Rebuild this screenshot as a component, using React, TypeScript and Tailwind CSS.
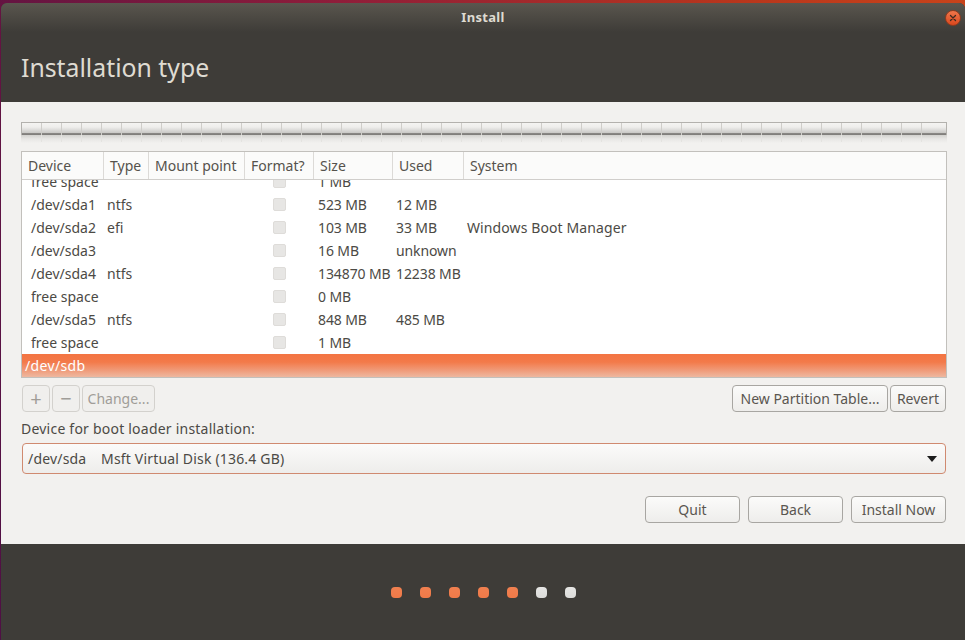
import React from "react";

const cols = ["w-[82px]", "w-[45px]", "w-[96px]", "w-[69px]", "w-[79px]", "w-[71px]", "flex-1"];
const headers = ["Device", "Type", "Mount point", "Format?", "Size", "Used", "System"];
const rows = [
  ["free space", "", "1 MB", "", ""],
  ["/dev/sda1", "ntfs", "523 MB", "12 MB", ""],
  ["/dev/sda2", "efi", "103 MB", "33 MB", "Windows Boot Manager"],
  ["/dev/sda3", "", "16 MB", "unknown", ""],
  ["/dev/sda4", "ntfs", "134870 MB", "12238 MB", ""],
  ["free space", "", "0 MB", "", ""],
  ["/dev/sda5", "ntfs", "848 MB", "485 MB", ""],
  ["free space", "", "1 MB", "", ""],
];
const ticks = Array.from({ length: 46 });
const dots = [1, 1, 1, 1, 1, 0, 0];

function Btn({ children, className = "" }: { children: React.ReactNode; className?: string }) {
  return (
    <button className={`h-[27px] flex items-center justify-center rounded-[4px] border border-[#a8a6a2] bg-gradient-to-b from-[#fbfbfa] to-[#eeedeb] text-[#5a5650] leading-none whitespace-nowrap ${className}`}>
      {children}
    </button>
  );
}

function Off({ children, className = "" }: { children: React.ReactNode; className?: string }) {
  return (
    <div className={`h-[27px] flex items-center justify-center rounded-[4px] border border-[#d3d1cd] bg-[#f0efed] text-[#a09d98] leading-none ${className}`}>
      {children}
    </div>
  );
}

export default function App() {
  return (
    <div
      className="w-[965px] h-[640px] overflow-hidden pt-[3px] pl-px bg-[linear-gradient(75deg,#4f0f45_0%,#8f1d3a_45%,#b8361c_80%,#c8431a_100%)] text-[14px] text-[#4c4a45]"
      style={{ fontFamily: '"Noto Sans", sans-serif' }}
    >
      <div className="h-[637px] flex flex-col rounded-t-[6px] overflow-hidden">
        <header className="h-[99px] shrink-0 bg-[#3e3c38] flex flex-col">
          <div className="h-[29px] shrink-0 relative flex items-center justify-center bg-gradient-to-b from-[#5a564e] to-[#3e3c38]">
            <span className="font-bold text-[13px] text-[#dfdbd2] tracking-[0.3px] pt-px">Install</span>
            <div className="absolute right-[4px] top-[7px] w-[16px] h-[16px] rounded-full bg-gradient-to-b from-[#f0764a] to-[#d9471c] border border-[#8f3a1e] flex items-center justify-center">
              <svg width="8" height="8" viewBox="0 0 8 8" className="block">
                <path d="M1.5 1.5 L6.5 6.5 M6.5 1.5 L1.5 6.5" stroke="#3e2a20" strokeWidth="1.3" strokeLinecap="round" />
              </svg>
            </div>
          </div>
          <h1 className="mt-[17px] ml-[20px] text-[24.8px] leading-[36px] text-[#dfdbd2] font-normal">Installation type</h1>
        </header>

        <main className="h-[442px] shrink-0 bg-[#f2f1ef] pt-[20px] pl-[20px] pr-[18px] flex flex-col">
          <div className="h-[13px] flex border border-[#b3b1ad] border-b-0 bg-[linear-gradient(to_bottom,#f5f4f2_0%,#eeedeb_35%,#c8c7c4_84%,#8a8885_86%,#7d7b78_100%)]">
            {ticks.map((_, i) => (
              <div key={i} className="w-[20px] h-full border-r border-[#cfcdc9] last:border-r-0 last:flex-1" />
            ))}
          </div>
          <div className="h-[16px] bg-[linear-gradient(to_bottom,#d2d1ce_0%,#e8e7e5_25%,#f2f1ef_50%)]">
            <div className="h-[7px] flex pl-px">
              {ticks.map((_, i) => (
                <div key={i} className="w-[20px] h-full border-r border-[#e4e3e0] last:border-r-0 last:flex-1" />
              ))}
            </div>
          </div>

          <section className="h-[226px] border border-[#c2c0bc] border-b-0 bg-white overflow-hidden flex flex-col">
            <div className="h-[28px] shrink-0 flex border-b border-[#d0cecb] bg-[#fbfbfa]">
              {headers.map((h, i) => (
                <div key={h} className={`${cols[i]} pl-[6px] flex items-center border-r border-[#dcdad7] last:border-r-0 text-[#55524c] whitespace-nowrap`}>
                  {h}
                </div>
              ))}
            </div>
            <div className="flex-1 overflow-hidden relative">
              <div className="-mt-[10px]">
                {rows.map((r, idx) => (
                  <div key={idx} className="h-[23px] flex items-center whitespace-nowrap text-[#4c4a45]">
                    <div className="w-[82px] pl-[9px]">{r[0]}</div>
                    <div className="w-[45px] pl-[3px]">{r[1]}</div>
                    <div className="w-[96px]" />
                    <div className="w-[69px] flex justify-center">
                      <div className="w-[13px] h-[13px] rounded-[2px] bg-[#e7e6e4] border border-[#dedcd9]" />
                    </div>
                    <div className="w-[79px] pl-[4px] tracking-[-0.1px]">{r[2]}</div>
                    <div className="w-[71px] pl-[3px] tracking-[-0.1px]">{r[3]}</div>
                    <div className="flex-1 pl-[3px] tracking-[0.1px]">{r[4]}</div>
                  </div>
                ))}
                <div className="h-[23px] flex items-center pl-[3px] tracking-[0.35px] text-white bg-[linear-gradient(to_bottom,#f37442_0%,#f37a4a_35%,#f09a78_70%,#eeb8a0_100%)]">/dev/sdb</div>
              </div>
            </div>
          </section>
          <div className="h-px bg-[#c2c0bc]" />

          <div className="mt-[7px] ml-px flex">
            <Off className="w-[28px] text-[20px]">+</Off>
            <Off className="w-[28px] ml-[2px] text-[20px]">−</Off>
            <Off className="w-[73px] ml-[2px]">Change...</Off>
            <Btn className="w-[156px] ml-auto">New Partition Table...</Btn>
            <Btn className="w-[56px] ml-[2px] mr-px">Revert</Btn>
          </div>

          <label className="mt-[7px] h-[20px] leading-[20px] tracking-[0.22px] text-[#4c4a45]">Device for boot loader installation:</label>

          <div className="mt-[4px] mx-px h-[31px] flex items-center pl-[5px] pr-[7px] rounded-[4px] border border-[#d08a70] bg-gradient-to-b from-[#fbfbfa] to-[#eeedeb] whitespace-pre tracking-[0.18px] text-[#4c4a45]">
            <span className="w-[73px]">/dev/sda</span>
            <span>Msft Virtual Disk (136.4 GB)</span>
            <svg width="12" height="6" viewBox="0 0 12 6" className="ml-auto block">
              <path d="M1 0 H11 L6 6 Z" fill="#1c1c1c" />
            </svg>
          </div>

          <div className="mt-[22px] mr-px flex justify-end gap-[8px]">
            <Btn className="w-[95px]">Quit</Btn>
            <Btn className="w-[95px]">Back</Btn>
            <Btn className="w-[95px]">Install Now</Btn>
          </div>
        </main>

        <footer className="flex-1 bg-[#3e3c38] flex justify-center items-start pt-[43px]">
          <div className="flex gap-[18px]">
            {dots.map((d, i) => (
              <div key={i} className={`w-[11px] h-[11px] rounded-[4px] ${d ? "bg-gradient-to-b from-[#f08050] to-[#f07a48]" : "bg-gradient-to-b from-[#e6e6e4] to-[#dcdcda]"}`} />
            ))}
          </div>
        </footer>
      </div>
    </div>
  );
}
